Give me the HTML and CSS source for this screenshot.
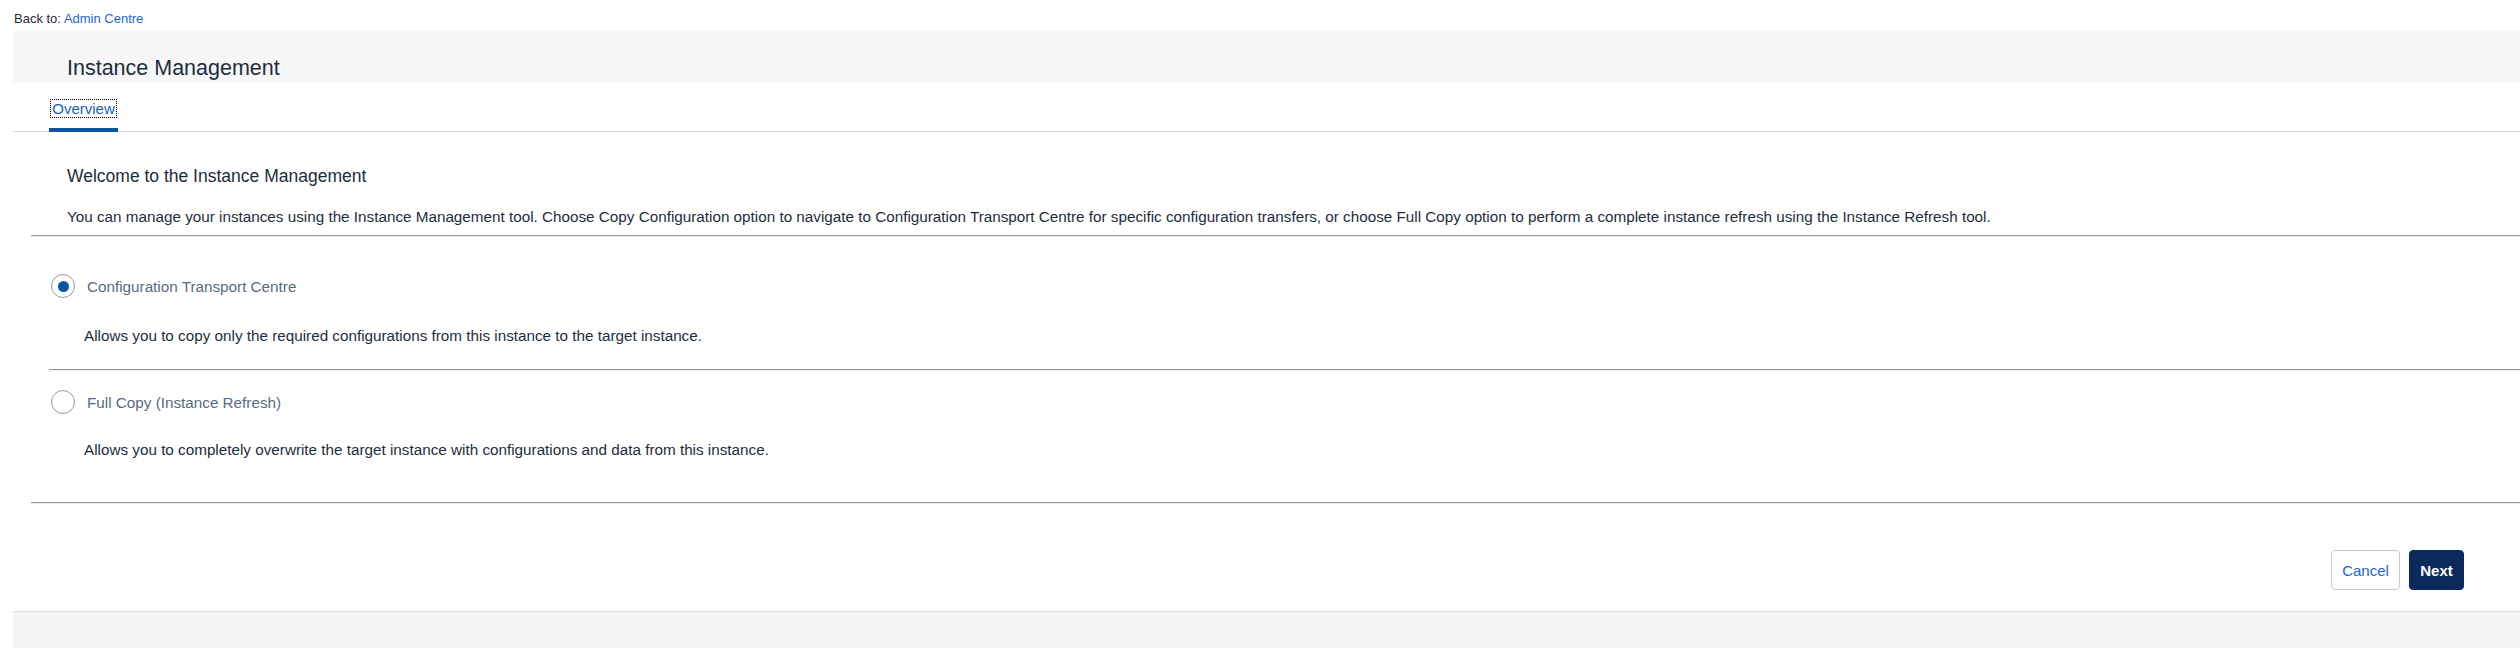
FILE: index.html
```html
<!DOCTYPE html>
<html lang="en">
<head>
  <meta charset="UTF-8">
  <meta name="viewport" content="width=device-width, initial-scale=1.0">
  <title>Instance Management</title>
  <link rel="stylesheet" href="styles.css">
</head>
<body>
  <div class="page">
    <div class="backlink">Back to: <a href="#">Admin Centre</a></div>

    <div class="header">
      <h1>Instance Management</h1>
    </div>

    <div class="tabs">
      <div class="tab active"><span class="tab-text">Overview</span></div>
    </div>

    <div class="intro">
      <h2>Welcome to the Instance Management</h2>
      <p>You can manage your instances using the Instance Management tool. Choose Copy Configuration option to navigate to Configuration Transport Centre for specific configuration transfers, or choose Full Copy option to perform a complete instance refresh using the Instance Refresh tool.</p>
    </div>

    <div class="options">
      <div class="option first">
        <label class="radio-row">
          <span class="radio checked"></span>
          <span class="radio-label">Configuration Transport Centre</span>
        </label>
        <p class="option-desc">Allows you to copy only the required configurations from this instance to the target instance.</p>
      </div>
      <div class="option second">
        <label class="radio-row">
          <span class="radio"></span>
          <span class="radio-label">Full Copy (Instance Refresh)</span>
        </label>
        <p class="option-desc">Allows you to completely overwrite the target instance with configurations and data from this instance.</p>
      </div>
    </div>

    <div class="actions">
      <button type="button" class="btn btn-ghost">Cancel</button>
      <button type="button" class="btn btn-primary">Next</button>
    </div>

    <div class="footer"></div>
  </div>
</body>
</html>
```

FILE: styles.css
```css
html, body {
  margin: 0;
  padding: 0;
  overflow: hidden;
}
body {
  font-family: "Liberation Sans", Arial, sans-serif;
  color: #1d2d3e;
  background: #fff;
}
.page {
  margin-left: 13px;
}
.backlink {
  font-size: 13px;
  line-height: 14px;
  padding: 12px 0 5px 1px;
  color: #1d2d3e;
}
.backlink a {
  color: #1b66d6;
  text-decoration: none;
}
.header {
  background: #f7f7f7;
  height: 52px;
  box-sizing: border-box;
  padding: 25px 0 0 54px;
}
.header h1 {
  margin: 0;
  font-size: 21.5px;
  line-height: 24px;
  font-weight: normal;
  color: #1d2d3e;
}
.tabs {
  display: flex;
  height: 48px;
  border-bottom: 1px solid #d9d9d9;
  padding-left: 36px;
}
.tab {
  width: 69px;
  box-sizing: border-box;
  padding-top: 17px;
  text-align: center;
}
.tab.active {
  border-bottom: 4px solid #0854a0;
  border-radius: 2px 2px 0 0;
  height: 49px;
}
.tab-text {
  font-size: 15px;
  line-height: 16px;
  color: #1b5fc4;
  outline: 1px dotted #000;
  padding: 0 1px;
}
.intro {
  margin-left: 18px;
  padding: 33px 0 9px 36px;
  border-bottom: 1px solid #9a9a9a;
  box-shadow: 0 1px 0 #ececec;
}
.intro h2 {
  margin: 0;
  font-size: 17.5px;
  line-height: 22px;
  font-weight: normal;
  color: #1d2d3e;
}
.intro p {
  margin: 21px 0 0;
  font-size: 15.25px;
  line-height: 18px;
  color: #1d2d3e;
}
.options {
  margin-left: 18px;
  border-bottom: 1px solid #9a9a9a;
  box-shadow: 0 1px 0 #ececec;
}
.option.first {
  margin-left: 18px;
  padding: 38px 0 24px 2px;
  border-bottom: 1px solid #9a9a9a;
  box-shadow: 0 1px 0 #ececec;
}
.option.second {
  padding: 20px 0 43px 20px;
}
.radio-row {
  display: flex;
  align-items: center;
  gap: 12px;
  height: 24px;
}
.radio {
  width: 24px;
  height: 24px;
  box-sizing: border-box;
  border: 1.5px solid #8b9aab;
  border-radius: 50%;
  display: flex;
  align-items: center;
  justify-content: center;
  background: #fff;
}
.radio.checked::after {
  content: "";
  width: 11px;
  height: 11px;
  border-radius: 50%;
  background: #0a55a6;
}
.radio-label {
  font-size: 15.25px;
  color: #556b82;
}
.option-desc {
  margin: 29px 0 0 33px;
  font-size: 15.25px;
  line-height: 18px;
  color: #1d2d3e;
}
.option.second .option-desc {
  margin-top: 27px;
}
.actions {
  display: flex;
  justify-content: flex-end;
  gap: 9px;
  padding: 47px 56px 21px 0;
}
.btn {
  height: 40px;
  border-radius: 4px;
  font-family: "Liberation Sans", Arial, sans-serif;
  font-size: 15px;
  cursor: pointer;
  padding: 0;
}
.btn-ghost {
  width: 69px;
  background: #fff;
  border: 1px solid #c3c9d2;
  color: #1b66d6;
}
.btn-primary {
  width: 55px;
  background: #0b2a5b;
  border: 1px solid #0b2a5b;
  color: #fff;
  font-weight: bold;
}
.footer {
  height: 36px;
  background: #f5f5f5;
  border-top: 1px solid #dcdcdc;
}
```
